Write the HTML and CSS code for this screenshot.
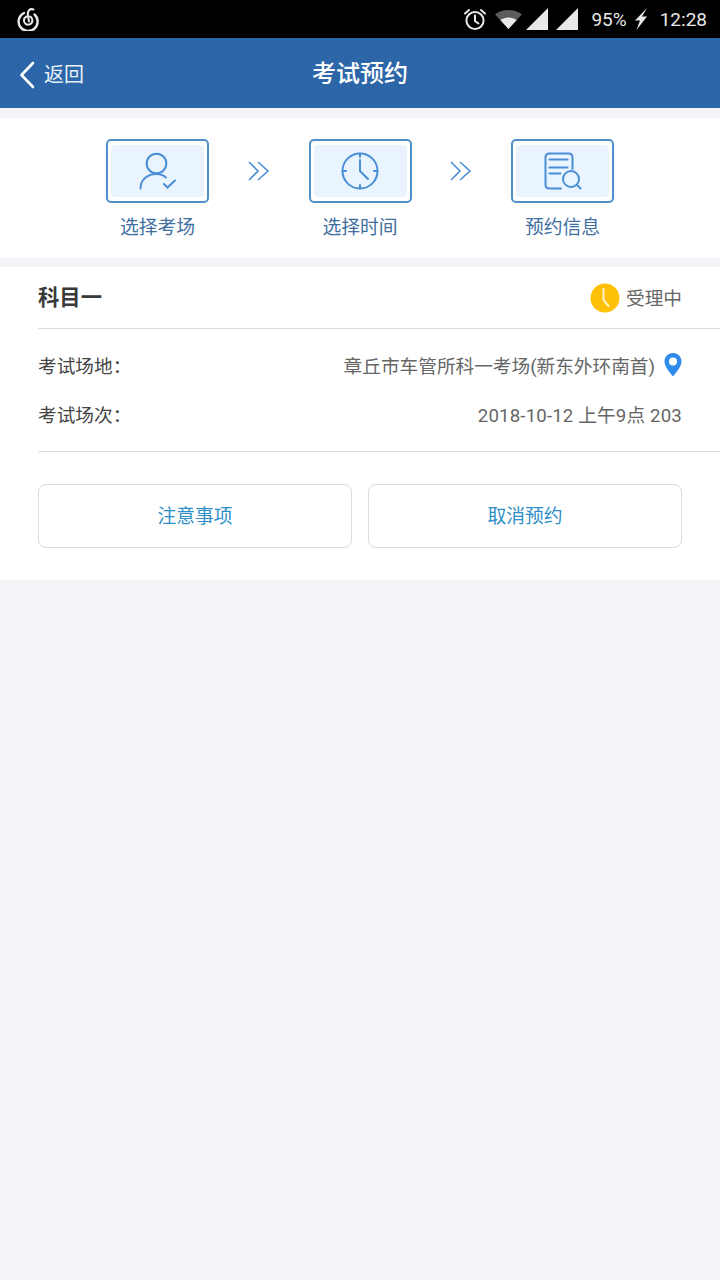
FILE: index.html
```html
<!DOCTYPE html>
<html>

<head>
  <meta charset="UTF-8">
  <title>考试预约</title>
  <link rel="stylesheet" href="styles.css">
</head>

<body>

  <div class="status-bar">
    <svg class="status-logo" width="24" height="24" viewBox="0 0 24 24" fill="none" stroke="#e8e8e8" stroke-width="2.400" stroke-linecap="round">
      <path d="M8 6 A9.500 9.500 0 1 0 18.500 7.500" />
      <path d="M17.500 2.500 C14 1.200 11.500 3.500 11.800 8 L13 14.500" stroke-width="2" />
      <path d="M11.800 9.300 C9.200 9.800 7.800 11.800 8 14 C8.300 16.500 10.500 18 12.800 17.600 C15.200 17.200 16.800 15 16.300 12.600 C16 11 15 10 14 9.500" stroke-width="2" />
    </svg>
    <div class="status-right">
      <svg width="24" height="24" viewBox="0 0 24 24" fill="none" stroke="#e8e8e8" stroke-width="2" stroke-linecap="round">
        <circle cx="12" cy="13.500" r="8.600" />
        <path d="M12 8.500 V14 L15.500 16.500" />
        <path d="M2 6.500 L6 3 M22 6.500 L18 3" />
      </svg>
      <svg class="status-wifi" width="29" height="21" viewBox="0 0 30 22" preserveAspectRatio="none">
        <path d="M1 5.500 C9 -0.500 21 -0.500 29 5.500 L15 21 Z" fill="#5c5c5c" />
        <path d="M6.500 11.500 C11.500 8 18.500 8 23.500 11.500 L15 21 Z" fill="#e8e8e8" />
      </svg>
      <svg class="status-signal" width="22" height="22" viewBox="0 0 22 22"><path d="M22 0 V22 H0 Z" fill="#e8e8e8" /></svg>
      <svg class="status-signal" width="22" height="22" viewBox="0 0 22 22"><path d="M22 0 V22 H0 Z" fill="#e8e8e8" /></svg>
      <span class="status-text status-battery">95%</span>
      <svg class="status-bolt" width="14" height="22" viewBox="0 0 14 22"><path d="M13 0 L1 12.500 H6 L2.500 22 L13 8.500 H8 Z" fill="#e8e8e8" /></svg>
      <span class="status-text status-time">12:28</span>
    </div>
  </div>

  <header class="app-header">
    <div class="back">
      <svg width="16" height="28" viewBox="0 0 16 28" fill="none" stroke="#fff" stroke-width="2.600" stroke-linecap="round" stroke-linejoin="round">
        <path d="M14 2 L2.500 14 L14 26" />
      </svg>
      <span>返回</span>
    </div>
    <h1>考试预约</h1>
  </header>

  <section class="steps">
    <div class="step">
      <div class="step-box">
        <div class="step-inner">
          <svg width="40" height="40" viewBox="0 0 40 40" fill="none" stroke="#4a8fd6" stroke-width="2" stroke-linecap="round">
            <circle cx="18.500" cy="12.500" r="9.800" />
            <path d="M2.500 37.500 C2.500 28 10 23 18.500 23 C22 23 25 24 28 26.500" />
            <path d="M26 33 L29.500 36.500 L37 29.500" />
          </svg>
        </div>
      </div>
      <span class="step-label">选择考场</span>
    </div>
    <div class="step-arrow">
      <svg width="22" height="22" viewBox="0 0 22 22" fill="none" stroke="#4a8fd6" stroke-width="1.600">
        <path d="M1 2 L10 11 L1 20 M10 2 L20 11 L10 20" />
      </svg>
    </div>
    <div class="step">
      <div class="step-box">
        <div class="step-inner">
          <svg width="40" height="40" viewBox="0 0 40 40" fill="none" stroke="#4a8fd6" stroke-width="2" stroke-linecap="round">
            <circle cx="20" cy="20" r="17.500" />
            <path d="M20 2.500 V6 M20 9 V20 L28 28 M2.500 20 H6 M34 20 H37.500 M20 34 V37.500" />
          </svg>
        </div>
      </div>
      <span class="step-label">选择时间</span>
    </div>
    <div class="step-arrow">
      <svg width="22" height="22" viewBox="0 0 22 22" fill="none" stroke="#4a8fd6" stroke-width="1.600">
        <path d="M1 2 L10 11 L1 20 M10 2 L20 11 L10 20" />
      </svg>
    </div>
    <div class="step">
      <div class="step-box">
        <div class="step-inner">
          <svg width="40" height="40" viewBox="0 0 40 40" fill="none" stroke="#4a8fd6" stroke-width="2" stroke-linecap="round">
            <path d="M18 37.500 H6.500 Q2.500 37.500 2.500 33.500 V6.500 Q2.500 2.500 6.500 2.500 H25.500 Q29.500 2.500 29.500 6.500 V18" />
            <path d="M6.500 8.500 H24.500 M6.500 16.500 H24.500 M6.500 22.500 H17.500" />
            <circle cx="28" cy="28" r="8" />
            <path d="M34 34 L37.500 37.500" />
          </svg>
        </div>
      </div>
      <span class="step-label">预约信息</span>
    </div>
  </section>

  <section class="card">
    <div class="card-title">
      <strong>科目一</strong>
      <div class="state">
        <svg width="30" height="30" viewBox="0 0 30 30">
          <circle cx="15" cy="15" r="14.500" fill="#ffc107" />
          <path d="M13.500 6 V17 L18.500 23" fill="none" stroke="#fff3c8" stroke-width="2" stroke-linecap="round" stroke-linejoin="round" />
        </svg>
        <span>受理中</span>
      </div>
    </div>
    <div class="info">
      <div class="info-row">
        <span class="info-key">考试场地：</span>
        <span class="info-value">章丘市车管所科一考场(新东外环南首)
          <svg class="pin" width="18" height="24" viewBox="0 0 18 24">
            <path d="M9 0 C4 0 0.500 3.800 0.500 8.500 C0.500 14 6 19.500 9 23.500 C12 19.500 17.500 14 17.500 8.500 C17.500 3.800 14 0 9 0 Z" fill="#2f8cec" />
            <circle cx="9" cy="8.500" r="4" fill="#fff" />
          </svg>
        </span>
      </div>
      <div class="info-row">
        <span class="info-key">考试场次：</span>
        <span class="info-value info-date">2018-10-12 上午9点 203</span>
      </div>
    </div>
    <div class="actions">
      <button class="action">注意事项</button>
      <button class="action">取消预约</button>
    </div>
  </section>

</body>

</html>
```

FILE: styles.css
```css
body {
  font-family: Roboto, "Noto Sans CJK SC", sans-serif;
  background-color: #f3f3f8;
  color: #333;
  margin: 0;
  height: 1280px;
  overflow: hidden;
}

.status-bar {
  height: 38px;
  background-color: #000;
  display: flex;
  align-items: center;
  justify-content: space-between;
  padding: 0 13px 0 16px;
}

.status-right {
  display: flex;
  align-items: center;
}

.status-wifi {
  margin-left: 7px;
}

.status-signal {
  margin-left: 8px;
}

.status-wifi + .status-signal {
  margin-left: 3px;
}

.status-text {
  color: #e8e8e8;
  font-size: 19px;
  padding-top: 1px;
}

.status-battery {
  margin-left: 13px;
}

.status-bolt {
  margin-left: 7px;
}

.status-time {
  margin-left: 12px;
}

.app-header {
  height: 70px;
  box-sizing: border-box;
  padding-bottom: 4px;
  background-color: #2c66a8;
  display: flex;
  align-items: center;
  justify-content: center;
  position: relative;
}

.app-header h1 {
  margin: 0;
  color: #fff;
  font-size: 24px;
  font-weight: 500;
}

.back {
  position: absolute;
  left: 19px;
  top: 21px;
  display: flex;
  align-items: center;
  gap: 9px;
  color: #e8f0f8;
  font-size: 20px;
}

.back span {
  padding-bottom: 2px;
}

.steps {
  margin-top: 10px;
  height: 140px;
  box-sizing: border-box;
  padding-top: 21px;
  background-color: #fff;
  display: flex;
  justify-content: center;
}

.step {
  width: 103px;
  display: flex;
  flex-direction: column;
  align-items: center;
}

.step-box {
  width: 103px;
  height: 64px;
  box-sizing: border-box;
  border: 2px solid #4f8fca;
  border-radius: 5px;
  padding: 4px 3px;
}

.step-inner {
  height: 100%;
  background-color: #e9f4fe;
  border-radius: 4px;
  display: flex;
  align-items: center;
  justify-content: center;
}

.step-label {
  margin-top: 12px;
  font-size: 18.800px;
  line-height: 26px;
  color: #3f6f9f;
  white-space: nowrap;
}

.step-arrow {
  width: 99.500px;
  height: 64px;
  display: flex;
  align-items: center;
  justify-content: center;
}

.card {
  margin-top: 9px;
  height: 313px;
  box-sizing: border-box;
  padding-left: 38px;
  background-color: #fff;
}

.card-title {
  height: 62px;
  box-sizing: border-box;
  padding-right: 38px;
  border-bottom: 1px solid #dcdcdc;
  display: flex;
  align-items: center;
  justify-content: space-between;
}

.card-title strong {
  font-size: 21.330px;
  font-weight: 700;
  color: #3a3a3a;
  padding-bottom: 4px;
}

.state {
  display: flex;
  align-items: center;
  gap: 6px;
  font-size: 18.670px;
  color: #666;
}

.state span {
  padding-bottom: 2px;
}

.info {
  height: 123px;
  box-sizing: border-box;
  padding: 13px 38px 0 0;
  border-bottom: 1px solid #dcdcdc;
}

.info-row {
  height: 49px;
  display: flex;
  align-items: center;
  justify-content: space-between;
  font-size: 18.670px;
}

.info-key {
  color: #444;
  padding-bottom: 4px;
}

.info-value {
  color: #666;
  display: flex;
  align-items: center;
  gap: 9px;
  padding-bottom: 4px;
}

.info-date {
  letter-spacing: 0.150px;
}

.pin {
  flex: none;
}

.actions {
  margin-top: 32px;
  padding-right: 38px;
  display: flex;
  gap: 16px;
}

.action {
  flex: 1;
  height: 64px;
  padding-bottom: 4px;
  background-color: #fff;
  border: 1px solid #dcdcdc;
  border-radius: 8px;
  color: #2f8fc8;
  font-family: inherit;
  font-size: 18.800px;
}
```
